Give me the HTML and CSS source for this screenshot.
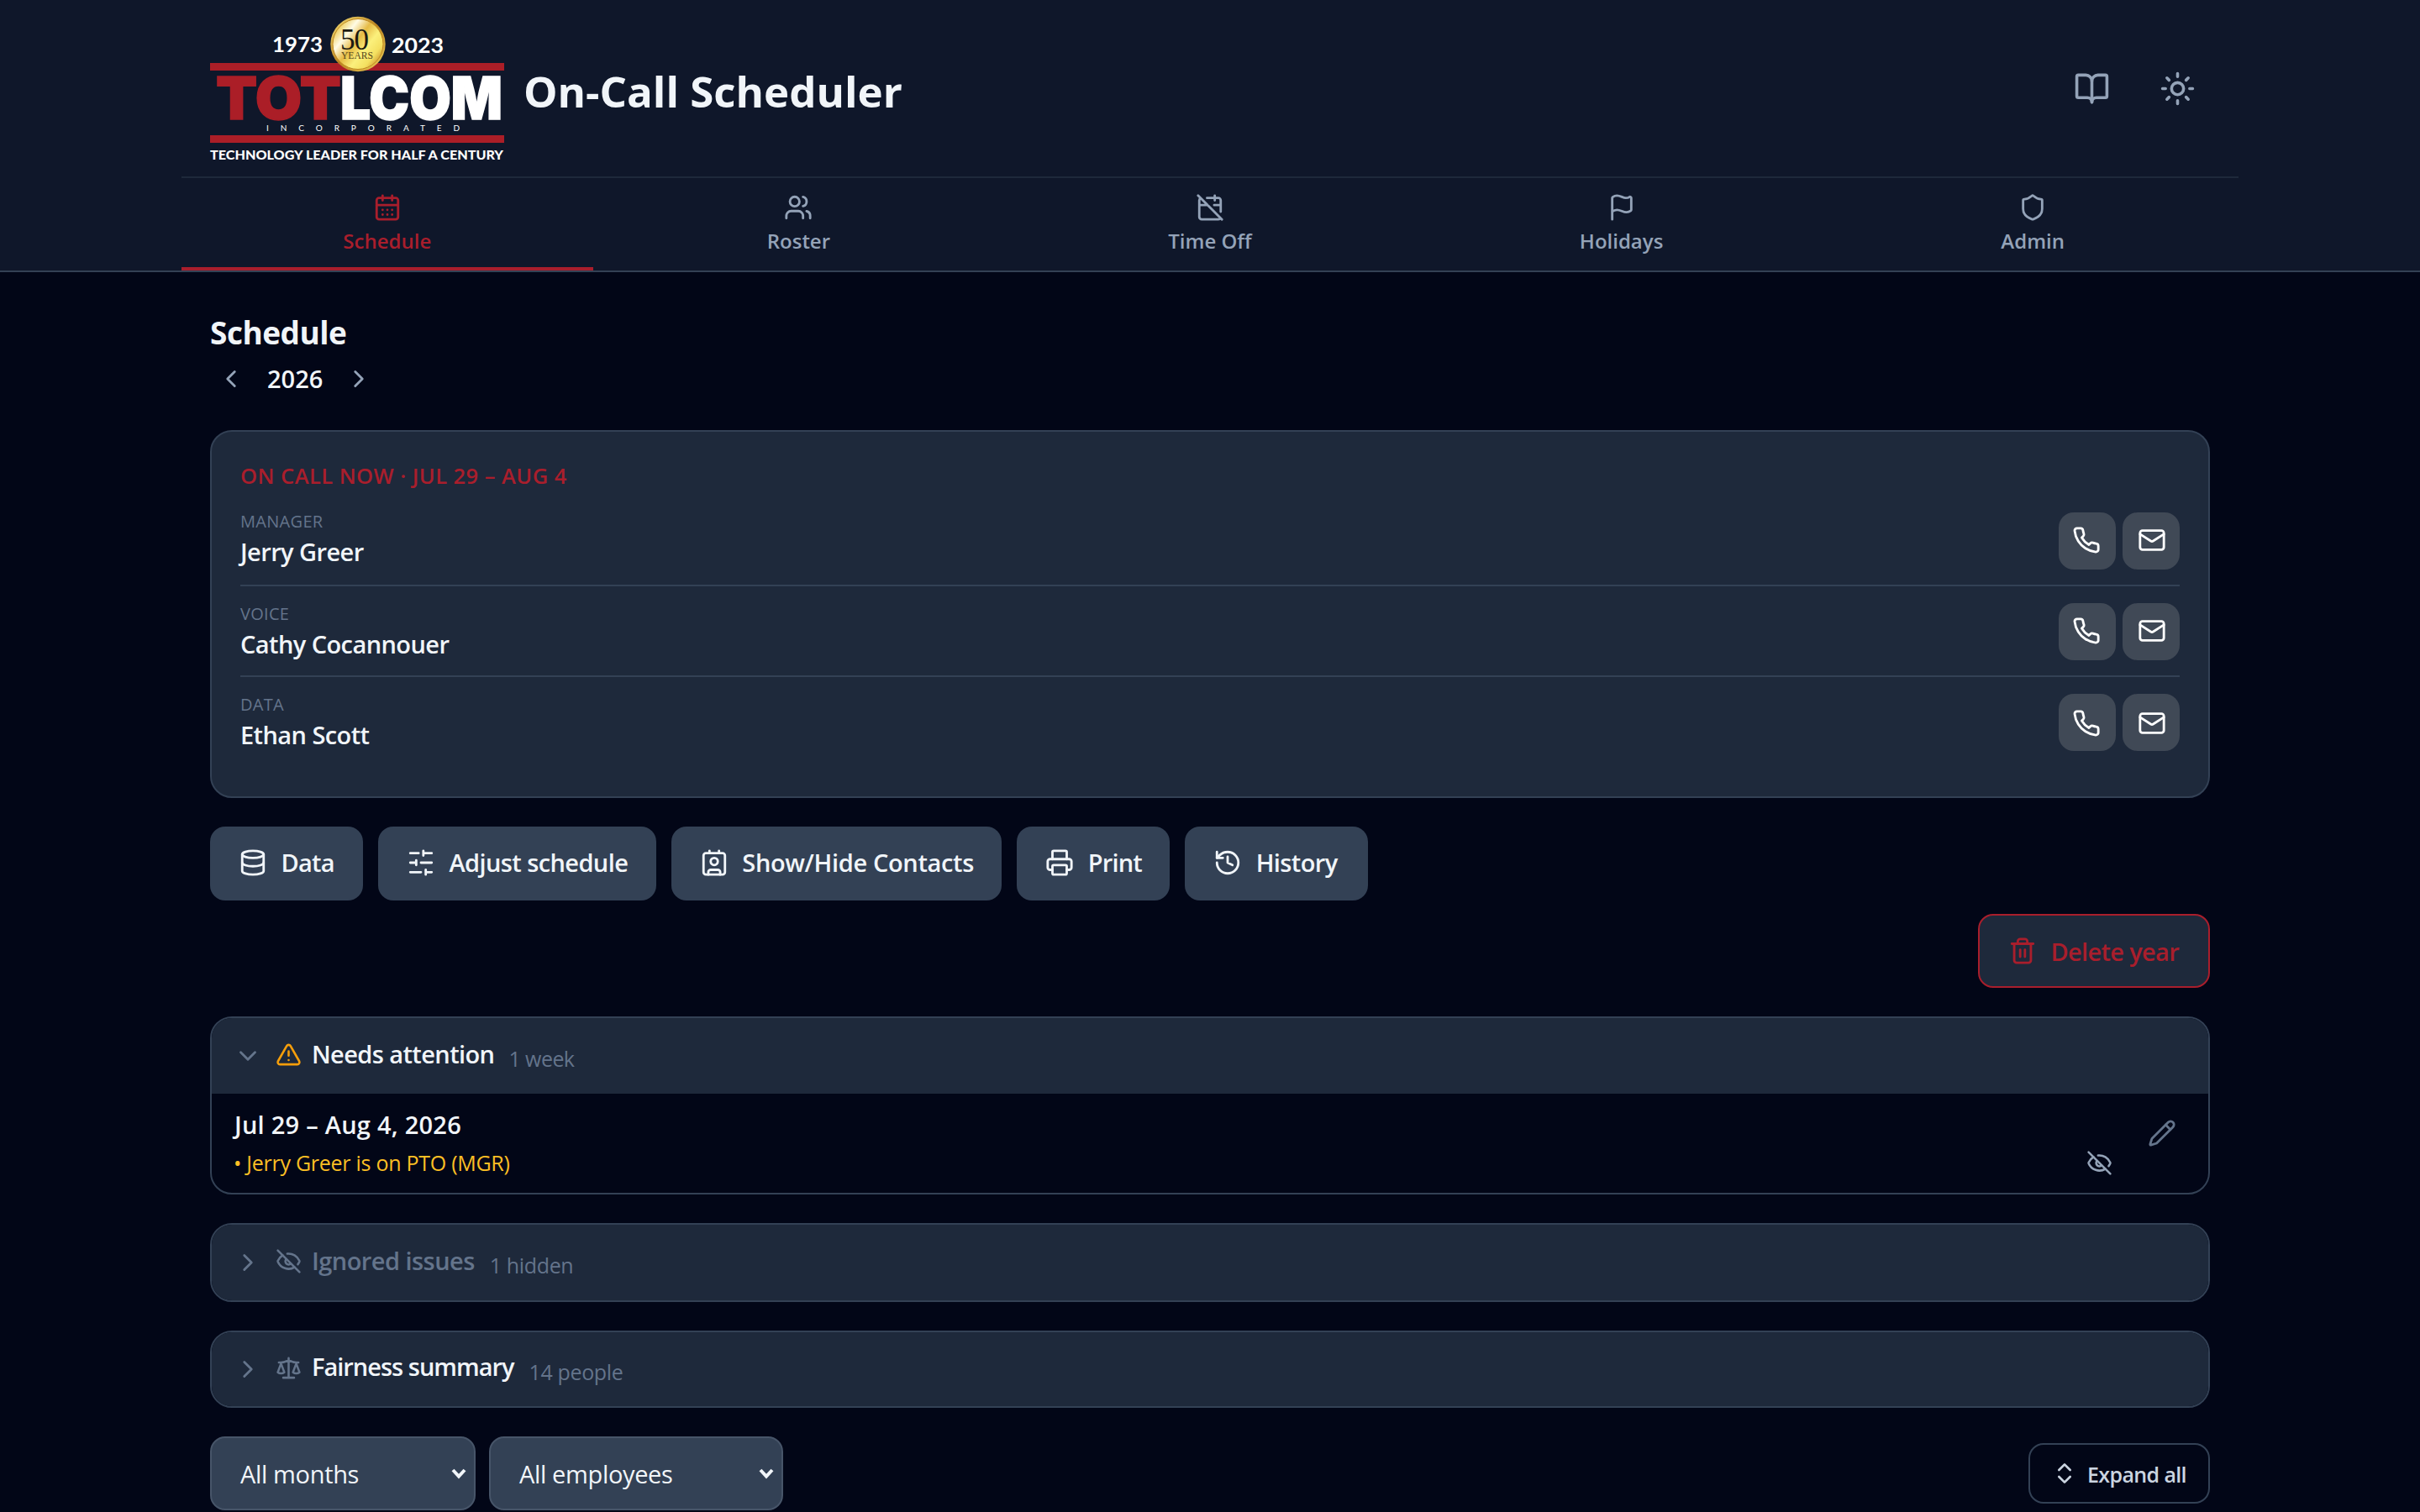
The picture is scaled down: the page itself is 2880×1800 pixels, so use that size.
FILE: index.html
```html
<!DOCTYPE html>
<html lang="en">
<head>
<meta charset="utf-8">
<title>On-Call Scheduler</title>
<link rel="stylesheet" href="styles.css">
</head>
<body>
<svg class="defs" aria-hidden="true">
  <symbol id="eye-off" viewBox="0 0 24 24"><path d="M10.733 5.076a10.744 10.744 0 0 1 11.205 6.575 1 1 0 0 1 0 .696 10.747 10.747 0 0 1-1.444 2.49"/><path d="M14.084 14.158a3 3 0 0 1-4.242-4.242"/><path d="M17.479 17.499a10.75 10.75 0 0 1-15.417-5.151 1 1 0 0 1 0-.696 10.75 10.75 0 0 1 4.446-5.143"/><path d="m2 2 20 20"/></symbol>
  <symbol id="phone" viewBox="0 0 24 24"><path d="M22 16.92v3a2 2 0 0 1-2.18 2 19.79 19.79 0 0 1-8.63-3.07 19.5 19.5 0 0 1-6-6 19.79 19.79 0 0 1-3.07-8.67A2 2 0 0 1 4.11 2h3a2 2 0 0 1 2 1.72 12.84 12.84 0 0 0 .7 2.81 2 2 0 0 1-.45 2.11L8.09 9.91a16 16 0 0 0 6 6l1.27-1.27a2 2 0 0 1 2.11-.45 12.84 12.84 0 0 0 2.81.7A2 2 0 0 1 22 16.92z"/></symbol>
  <symbol id="mail" viewBox="0 0 24 24"><rect x="2" y="4" width="20" height="16" rx="2"/><path d="m22 7-8.97 5.7a1.94 1.94 0 0 1-2.06 0L2 7"/></symbol>
  <symbol id="chev-right" viewBox="0 0 24 24"><path d="m9 18 6-6-6-6"/></symbol>
  <symbol id="chev-left" viewBox="0 0 24 24"><path d="m15 18-6-6 6-6"/></symbol>
  <symbol id="chev-down" viewBox="0 0 24 24"><path d="m6 9 6 6 6-6"/></symbol>
</svg>

<header class="header">
  <div class="container">
    <div class="brand-row">
      <svg class="logo" viewBox="250 18 350 176" role="img" aria-label="TOTLCOM Incorporated">
        <defs>
          <linearGradient id="gold" x1="0" y1="0" x2="1" y2="0.8">
            <stop offset="0" stop-color="#e9bf3c"/><stop offset=".15" stop-color="#f0d060"/><stop offset=".32" stop-color="#fffbe6"/><stop offset=".5" stop-color="#e6bb45"/><stop offset=".68" stop-color="#fbf07c"/><stop offset=".85" stop-color="#f4e060"/><stop offset="1" stop-color="#c98f28"/>
          </linearGradient>
          <linearGradient id="rim" x1="0" y1="0" x2="1" y2="1">
            <stop offset="0" stop-color="#f6e27a"/><stop offset=".5" stop-color="#b9821f"/><stop offset="1" stop-color="#f2d65e"/>
          </linearGradient>
        </defs>
        <rect class="logo-red" x="250" y="75" width="350" height="9"/>
        <rect class="logo-red" x="250" y="161" width="350" height="9"/>
        <circle cx="426" cy="52.5" r="32.7" fill="url(#rim)"/>
        <circle cx="426" cy="52.5" r="30" fill="url(#gold)" stroke="#c08a22" stroke-width="1"/>
        <text class="coin-number" x="405" y="58.7" textLength="34">50</text>
        <text class="coin-years" x="406" y="70" textLength="38" lengthAdjust="spacingAndGlyphs">YEARS</text>
        <text class="logo-year" x="324" y="62.3" textLength="60" lengthAdjust="spacingAndGlyphs">1973</text>
        <text class="logo-year" x="466" y="63.3" textLength="62" lengthAdjust="spacingAndGlyphs">2023</text>
        <text class="wordmark logo-red" x="257" y="142" textLength="149" lengthAdjust="spacingAndGlyphs">TOT</text>
        <text class="wordmark logo-white" x="405" y="142" textLength="193" lengthAdjust="spacingAndGlyphs">LCOM</text>
        <text class="logo-inc" x="317" y="155.7" textLength="230">INCORPORATED</text>
        <text class="logo-tag" x="250" y="190" textLength="349" lengthAdjust="spacingAndGlyphs">TECHNOLOGY LEADER FOR HALF A CENTURY</text>
      </svg>
      <h1 class="app-title">On-Call Scheduler</h1>
      <div class="header-actions">
        <svg class="icon icon-lg" viewBox="0 0 24 24"><path d="M12 7v14"/><path d="M3 18a1 1 0 0 1-1-1V4a1 1 0 0 1 1-1h5a4 4 0 0 1 4 4 4 4 0 0 1 4-4h5a1 1 0 0 1 1 1v13a1 1 0 0 1-1 1h-6a3 3 0 0 0-3 3 3 3 0 0 0-3-3z"/></svg>
        <svg class="icon icon-lg" viewBox="0 0 24 24"><circle cx="12" cy="12" r="4"/><path d="M12 2v2M12 20v2M4.93 4.93l1.41 1.41M17.66 17.66l1.41 1.41M2 12h2M20 12h2M6.34 17.66l-1.41 1.41M19.07 4.93l-1.41 1.41"/></svg>
      </div>
    </div>
    <nav class="tabs">
      <a class="tab active"><svg class="icon" viewBox="0 0 24 24"><path d="M8 2v4M16 2v4"/><rect x="3" y="4" width="18" height="18" rx="2"/><path d="M3 10h18M8 14h.01M12 14h.01M16 14h.01M8 18h.01M12 18h.01M16 18h.01"/></svg><span>Schedule</span></a>
      <a class="tab"><svg class="icon" viewBox="0 0 24 24"><path d="M16 21v-2a4 4 0 0 0-4-4H6a4 4 0 0 0-4 4v2"/><circle cx="9" cy="7" r="4"/><path d="M22 21v-2a4 4 0 0 0-3-3.87M16 3.13a4 4 0 0 1 0 7.75"/></svg><span>Roster</span></a>
      <a class="tab"><svg class="icon" viewBox="0 0 24 24"><path d="M4.2 4.2A2 2 0 0 0 3 6v14a2 2 0 0 0 2 2h14a2 2 0 0 0 1.82-1.18M21 15.5V6a2 2 0 0 0-2-2H9.5M16 2v4M3 10h7M21 10h-5.5M2 2l20 20"/></svg><span>Time Off</span></a>
      <a class="tab"><svg class="icon" viewBox="0 0 24 24"><path d="M4 22V4a1 1 0 0 1 .4-.8A6 6 0 0 1 8 2c3 0 5 2 7.333 2q2 0 3.067-.8A1 1 0 0 1 20 4v10a1 1 0 0 1-.4.8A6 6 0 0 1 16 16c-3 0-5-2-8-2a6 6 0 0 0-4 1.528"/></svg><span>Holidays</span></a>
      <a class="tab"><svg class="icon" viewBox="0 0 24 24"><path d="M20 13c0 5-3.5 7.5-7.66 8.95a1 1 0 0 1-.67-.01C7.5 20.5 4 18 4 13V6a1 1 0 0 1 1-1c2 0 4.5-1.2 6.24-2.72a1.17 1.17 0 0 1 1.52 0C14.51 3.81 17 5 19 5a1 1 0 0 1 1 1z"/></svg><span>Admin</span></a>
    </nav>
  </div>
</header>

<main class="container main">
  <h2 class="page-title">Schedule</h2>
  <div class="year-nav">
    <button class="year-btn"><svg class="icon"><use href="#chev-left"/></svg></button>
    <span class="year">2026</span>
    <button class="year-btn"><svg class="icon"><use href="#chev-right"/></svg></button>
  </div>

  <section class="oncall">
    <div class="oncall-label">ON CALL NOW · JUL 29 – AUG 4</div>
    <div class="person">
      <div class="person-text"><div class="role">MANAGER</div><div class="name">Jerry Greer</div></div>
      <div class="contact"><button class="contact-btn call"><svg class="icon"><use href="#phone"/></svg></button><button class="contact-btn mail"><svg class="icon"><use href="#mail"/></svg></button></div>
    </div>
    <div class="person">
      <div class="person-text"><div class="role">VOICE</div><div class="name">Cathy Cocannouer</div></div>
      <div class="contact"><button class="contact-btn call"><svg class="icon"><use href="#phone"/></svg></button><button class="contact-btn mail"><svg class="icon"><use href="#mail"/></svg></button></div>
    </div>
    <div class="person">
      <div class="person-text"><div class="role">DATA</div><div class="name">Ethan Scott</div></div>
      <div class="contact"><button class="contact-btn call"><svg class="icon"><use href="#phone"/></svg></button><button class="contact-btn mail"><svg class="icon"><use href="#mail"/></svg></button></div>
    </div>
  </section>

  <div class="toolbar">
    <button class="btn btn-data"><svg class="icon" viewBox="0 0 24 24"><ellipse cx="12" cy="5" rx="9" ry="3"/><path d="M3 5v14a9 3 0 0 0 18 0V5"/><path d="M3 12a9 3 0 0 0 18 0"/></svg><span>Data</span></button>
    <button class="btn btn-adjust"><svg class="icon" viewBox="0 0 24 24"><path d="M21 4h-7M10 4H3M21 12h-9M8 12H3M21 20h-5M12 20H3M14 2v4M8 10v4M16 18v4"/></svg><span>Adjust schedule</span></button>
    <button class="btn btn-contacts"><svg class="icon" viewBox="0 0 24 24"><path d="M16 2v2M8 2v2M7 22v-2a2 2 0 0 1 2-2h6a2 2 0 0 1 2 2v2"/><circle cx="12" cy="11" r="3"/><rect x="3" y="4" width="18" height="18" rx="2"/></svg><span>Show/Hide Contacts</span></button>
    <button class="btn btn-print"><svg class="icon" viewBox="0 0 24 24"><path d="M6 18H4a2 2 0 0 1-2-2v-5a2 2 0 0 1 2-2h16a2 2 0 0 1 2 2v5a2 2 0 0 1-2 2h-2"/><path d="M6 9V3a1 1 0 0 1 1-1h10a1 1 0 0 1 1 1v6"/><rect x="6" y="14" width="12" height="8" rx="1"/></svg><span>Print</span></button>
    <button class="btn btn-history"><svg class="icon" viewBox="0 0 24 24"><path d="M3 12a9 9 0 1 0 9-9 9.75 9.75 0 0 0-6.74 2.74L3 8"/><path d="M3 3v5h5M12 7v5l4 2"/></svg><span>History</span></button>
  </div>
  <div class="danger-row">
    <button class="btn btn-danger"><svg class="icon" viewBox="0 0 24 24"><path d="M3 6h18M19 6v14a2 2 0 0 1-2 2H7a2 2 0 0 1-2-2V6M8 6V4a2 2 0 0 1 2-2h4a2 2 0 0 1 2 2v2M10 11v6M14 11v6"/></svg><span>Delete year</span></button>
  </div>

  <section class="panel">
    <div class="panel-head">
      <svg class="icon"><use href="#chev-down"/></svg>
      <svg class="icon icon-sm warn" viewBox="0 0 24 24"><path d="m21.73 18-8-14a2 2 0 0 0-3.48 0l-8 14A2 2 0 0 0 4 21h16a2 2 0 0 0 1.73-3M12 9v4M12 17h.01"/></svg>
      <span class="panel-title">Needs attention</span>
      <span class="panel-count week-count">1 week</span>
    </div>
    <div class="issue">
      <div class="issue-main">
        <div class="issue-date">Jul 29 – Aug 4, 2026</div>
        <div class="issue-line"><span>• Jerry Greer is on PTO (MGR)</span><svg class="icon icon-sm hide-icon"><use href="#eye-off"/></svg></div>
      </div>
      <svg class="icon pencil" viewBox="0 0 24 24"><path d="M21.174 6.812a1 1 0 0 0-3.986-3.987L3.842 16.174a2 2 0 0 0-.5.83l-1.321 4.352a.5.5 0 0 0 .623.622l4.353-1.32a2 2 0 0 0 .83-.497z"/><path d="m15 5 4 4"/></svg>
    </div>
  </section>

  <section class="panel muted">
    <div class="panel-head">
      <svg class="icon"><use href="#chev-right"/></svg>
      <svg class="icon icon-sm"><use href="#eye-off"/></svg>
      <span class="panel-title">Ignored issues</span>
      <span class="panel-count">1 hidden</span>
    </div>
  </section>

  <section class="panel fairness">
    <div class="panel-head">
      <svg class="icon"><use href="#chev-right"/></svg>
      <svg class="icon icon-sm" viewBox="0 0 24 24"><path d="m16 16 3-8 3 8c-.87.65-1.92 1-3 1s-2.13-.35-3-1ZM2 16l3-8 3 8c-.87.65-1.92 1-3 1s-2.13-.35-3-1ZM7 21h10M12 3v18M3 7h2c2 0 5-1 7-2 2 1 5 2 7 2h2"/></svg>
      <span class="panel-title">Fairness summary</span>
      <span class="panel-count">14 people</span>
    </div>
  </section>

  <div class="filters">
    <div class="select select-months"><span>All months</span><svg class="arrow" viewBox="0 0 20 14"><path d="m3 3 7 7.5 7-7.5"/></svg></div>
    <div class="select select-people"><span>All employees</span><svg class="arrow" viewBox="0 0 20 14"><path d="m3 3 7 7.5 7-7.5"/></svg></div>
    <button class="expand"><svg class="icon" viewBox="0 0 24 24"><path d="m7 15 5 5 5-5M7 9l5-5 5 5"/></svg><span>Expand all</span></button>
  </div>
</main>
</body>
</html>
```
FILE: styles.css
```css
* { box-sizing: border-box; }

body {
  margin: 0;
  height: 1800px;
  overflow: hidden;
  background: #020617;
  color: #f1f5f9;
  font-family: "Open Sans", "Noto Sans", sans-serif;
  font-size: 29px;
}

h1, h2 { margin: 0; }
button { font: inherit; color: inherit; border: 0; padding: 0; background: none; }
.defs { display: none; }

.icon {
  width: 34px;
  height: 34px;
  flex: none;
  fill: none;
  stroke: currentColor;
  stroke-width: 2;
  stroke-linecap: round;
  stroke-linejoin: round;
}
.icon-sm { width: 31px; height: 31px; }
.icon-lg { width: 43px; height: 43px; }

.container { width: 2448px; margin: 0 auto; }

/* Header */
.header { background: #0f172a; border-bottom: 2px solid #334155; }
.brand-row { display: flex; align-items: center; height: 212px; padding: 0 34px; border-bottom: 2px solid #1e293b; }
.logo { width: 350px; height: 176px; margin-top: 2px; overflow: visible; }
.app-title { margin: 5px 0 0 23px; font-size: 51px; font-weight: 700; line-height: 60px; }
.header-actions { display: flex; gap: 59px; margin-left: auto; padding-right: 17px; color: #94a3b8; }

.logo-red { fill: #ab1e27; stroke: #ab1e27; }
.logo-white { fill: #fff; stroke: #fff; }
rect.logo-red { stroke: none; }
.wordmark { font: 900 70px Inter, sans-serif; stroke-width: 1.5; }
.coin-number { font: 35px "Liberation Serif", serif; fill: #1c1a12; }
.coin-years { font: 13px "Liberation Serif", serif; fill: #54451c; }
.logo-year { font: 700 25px Lato, sans-serif; fill: #fff; }
.logo-inc { font: 400 10px Lato, sans-serif; fill: #fff; }
.logo-tag { font: 900 14.3px Lato, sans-serif; fill: #fff; }

.tabs { display: grid; grid-template-columns: repeat(5, 1fr); height: 110px; }
.tab {
  display: flex;
  flex-direction: column;
  align-items: center;
  gap: 7px;
  padding-top: 18px;
  border-bottom: 4px solid transparent;
  color: #94a3b8;
  font-size: 24px;
  font-weight: 600;
  line-height: 32px;
}
.tab.active { color: #a91e2c; border-color: #a91e2c; }

/* Page heading */
.main { padding: 48px 34px 0; }
.page-title { font-size: 37px; font-weight: 700; line-height: 48px; letter-spacing: -0.5px; }
.year-nav { display: flex; align-items: center; gap: 18px; margin-top: 6px; height: 50px; }
.year-btn { display: flex; width: 50px; height: 50px; padding: 8px; color: #94a3b8; }
.year { margin-bottom: 2px; font-weight: 600; }

/* On-call card */
.oncall { margin-top: 36px; height: 438px; padding: 34px; background: #1e293b; border: 2px solid #334155; border-radius: 26px; }
.oncall-label { margin-bottom: 6px; color: #a91e2c; font-size: 25.5px; font-weight: 600; line-height: 36px; letter-spacing: 0.45px; }
.person { display: flex; justify-content: space-between; align-items: flex-start; height: 108px; padding-top: 20px; }
.person:not(:last-child) { border-bottom: 2px solid #334155; }
.person-text { margin-top: -1px; }
.person:nth-child(2) .person-text { margin-top: -3px; }
.role { color: #64748b; font-size: 20px; line-height: 28px; letter-spacing: 0.3px; }
.name { margin-top: 1px; font-weight: 600; line-height: 42px; letter-spacing: -0.58px; }
.contact { display: flex; gap: 8px; }
.contact-btn { display: flex; align-items: center; justify-content: center; width: 68px; height: 68px; padding-bottom: 2px; background: #404956; border-radius: 18px; color: #fff; }
.contact-btn.call { padding-right: 2px; }
.contact-btn.mail { padding-left: 2px; }
.person:last-child .contact-btn { padding-bottom: 0; padding-top: 2px; }

/* Buttons */
.toolbar { display: flex; gap: 17.8px; margin-top: 34px; }
.btn {
  display: flex;
  align-items: center;
  gap: 16.5px;
  height: 88px;
  padding: 0 0 2px 34px;
  border-radius: 18px;
  background: #334155;
  font-weight: 600;
  white-space: nowrap;
  letter-spacing: -0.6px;
}
.btn span { padding-bottom: 2px; }
.btn-data { width: 182.2px; letter-spacing: -0.8px; }
.btn-adjust { width: 331px; }
.btn-contacts { width: 393.6px; letter-spacing: -0.35px; }
.btn-print { width: 182.2px; letter-spacing: -0.8px; }
.btn-history { width: 218px; }
.danger-row { display: flex; justify-content: flex-end; margin-top: 16px; }
.btn-danger { width: 276px; padding-bottom: 0; background: #1e293b; border: 2px solid #a91e2c; color: #a91e2c; letter-spacing: -0.68px; }
.btn-danger span { padding-bottom: 0; }

/* Collapsible panels */
.panel { margin-top: 34px; border: 2px solid #334155; border-radius: 26px; overflow: hidden; }
.panel-head { display: flex; align-items: center; height: 90px; padding-left: 26px; background: #1e293b; color: #64748b; }
.panel-head .icon-sm { margin: 0 12.5px 4px 15.5px; }
.panel-head .warn { color: #f59e0b; }
.panel-title { margin-bottom: 4px; color: #f1f5f9; font-weight: 600; line-height: 40px; letter-spacing: -0.6px; }
.panel-count { margin: 5px 0 0 18px; font-size: 25px; line-height: 36px; letter-spacing: -0.35px; }
.week-count { margin-left: 17px; letter-spacing: -0.56px; }
.muted .panel-title { color: #64748b; letter-spacing: -0.55px; }
.fairness .panel-head { height: 88px; }
.fairness .panel-title { margin-bottom: 6px; letter-spacing: -1px; }

.issue { display: flex; gap: 42px; height: 118px; padding: 17px 38px 0 26px; }
.issue-main { flex: 1; }
.issue-date { padding-left: 1px; font-weight: 600; line-height: 40px; letter-spacing: 0.25px; }
.issue-line { display: flex; justify-content: space-between; align-items: center; margin-top: 7px; color: #fbbf24; font-size: 25px; line-height: 36px; letter-spacing: -0.27px; }
.hide-icon { color: #94a3b8; }
.pencil { margin-top: 13px; color: #64748b; }

/* Filters */
.filters { display: flex; align-items: center; gap: 16px; margin-top: 34px; }
.select {
  display: flex;
  align-items: center;
  justify-content: space-between;
  height: 88px;
  padding: 0 8px 0 34px;
  background: #334155;
  border: 2px solid #475569;
  border-radius: 18px;
  letter-spacing: -0.35px;
}
.select-months { width: 316px; }
.select-people { width: 350px; }
.arrow { width: 20px; height: 14px; fill: none; stroke: currentColor; stroke-width: 4; }
.expand {
  display: flex;
  align-items: center;
  gap: 11px;
  width: 216px;
  height: 72px;
  margin-left: auto;
  padding-left: 25px;
  border: 2px solid #334155;
  border-radius: 18px;
  color: #cbd5e1;
  font-size: 25px;
  font-weight: 600;
  white-space: nowrap;
  letter-spacing: -0.62px;
}
.expand span { padding-top: 2px; }
.expand .icon { width: 32px; height: 32px; }
```
